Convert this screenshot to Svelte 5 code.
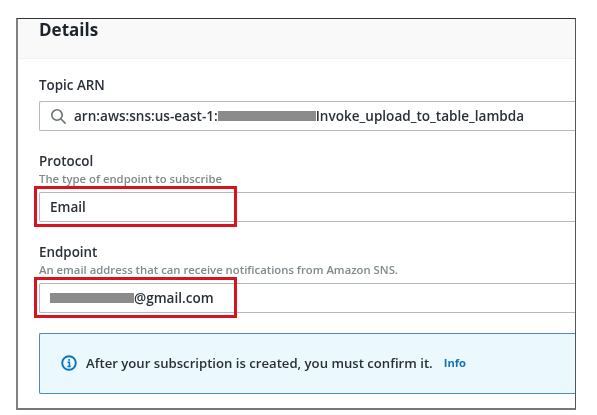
<script>
  const iconStroke = "#6b7272";
</script>

<div class="page">
  <section class="panel">
    <header class="head"><h2>Details</h2></header>

    <div class="body">
      <div class="field topic">
        <span class="label">Topic ARN</span>
        <div class="box search">
          <svg width="17" height="17" viewBox="0 0 17 17" fill="none" stroke={iconStroke} stroke-width="1.6">
            <circle cx="7" cy="7" r="5.2" />
            <path d="M11 11l4.6 4.6" />
          </svg>
          <span class="value">arn:aws:sns:us-east-1:<span class="redact arn"></span>Invoke_upload_to_table_lambda</span>
        </div>
      </div>

      <div class="field protocol">
        <span class="label">Protocol</span>
        <span class="hint">The type of endpoint to subscribe</span>
        <div class="box"><span class="value">Email</span></div>
        <div class="mark"></div>
      </div>

      <div class="field endpoint">
        <span class="label">Endpoint</span>
        <span class="hint">An email address that can receive notifications from Amazon SNS.</span>
        <div class="box"><span class="value"><span class="redact mail"></span>@gmail.com</span></div>
        <div class="mark"></div>
      </div>

      <div class="notice">
        <svg width="16" height="16" viewBox="0 0 16 16" fill="none">
          <circle cx="8" cy="8" r="6.8" stroke="#0b73bd" stroke-width="1.9" />
          <path d="M6.6 7.2H8.4V11.2M6.4 11.4H9.8" stroke="#0b73bd" stroke-width="1.5" />
          <rect x="7.2" y="4.1" width="1.7" height="1.7" fill="#0b73bd" />
        </svg>
        <span class="msg">After your subscription is created, you must confirm it.</span>
        <span class="info">Info</span>
      </div>
    </div>
  </section>
</div>

<style>
  :global(body) {
    margin: 0;
    background: #fff;
  }

  .page {
    width: 597px;
    height: 415px;
    padding: 18px 21px 0 16px;
    box-sizing: border-box;
    font-family: "Open Sans", "Noto Sans", sans-serif;
    color: #20262e;
    filter: blur(0.35px);
  }

  .panel {
    height: 392px;
    box-sizing: border-box;
    border-top: 1px solid #333;
    border-right: 1px solid #555;
    border-bottom: 2px solid #777;
    border-left: 2px solid #808080;
    overflow: hidden;
  }

  .head {
    height: 40px;
    background: #f9f9f9;
    border-bottom: 1px solid #f0f1f1;
    box-sizing: border-box;
    padding-left: 21px;
  }

  h2 {
    margin: 0;
    font-size: 17px;
    line-height: 22px;
    font-weight: 700;
    color: #1d232b;
  }

  .body {
    padding: 17px 0 0 21px;
    display: flex;
    flex-direction: column;
  }

  .field {
    position: relative;
    display: flex;
    flex-direction: column;
  }

  .label {
    font-size: 13.4px;
    line-height: 18px;
    font-weight: 600;
    color: #2a3038;
  }

  .hint {
    margin-top: 2px;
    font-size: 11.3px;
    line-height: 14px;
    font-weight: 600;
    color: #7f8a8c;
  }

  .box {
    margin-top: 6px;
    height: 30px;
    box-sizing: border-box;
    border: 1px solid #b4b9bb;
    border-right: 0;
    border-radius: 2px 0 0 2px;
    display: flex;
    align-items: center;
    padding-left: 10px;
    background: #fff;
  }

  .topic .box {
    margin-top: 7px;
  }

  .protocol,
  .endpoint {
    margin-top: 21px;
  }

  .search {
    gap: 7px;
  }

  .value {
    font-size: 13.55px;
    color: #2a3038;
    white-space: nowrap;
    display: flex;
    align-items: center;
    font-weight: 600;
  }

  .redact {
    display: inline-block;
    height: 10px;
    background: #8b8b8b;
  }

  .arn {
    width: 98px;
  }

  .mail {
    width: 84px;
  }

  .mark {
    position: absolute;
    left: -5px;
    bottom: -5px;
    width: 203px;
    height: 41px;
    box-sizing: border-box;
    border: 3px solid #d6141f;
  }

  .notice {
    margin-top: 20px;
    height: 61px;
    box-sizing: border-box;
    background: #ebf8fe;
    border: 1px solid #4a8cc6;
    border-right: 0;
    border-radius: 2px 0 0 2px;
    padding: 0 0 2px 21px;
    display: flex;
    align-items: center;
  }

  .msg {
    margin-left: 9px;
    font-size: 13.15px;
    font-weight: 600;
    color: #2a3038;
    white-space: nowrap;
  }

  .info {
    margin-left: 11px;
    font-size: 11.2px;
    font-weight: 700;
    color: #1571b8;
  }
</style>
